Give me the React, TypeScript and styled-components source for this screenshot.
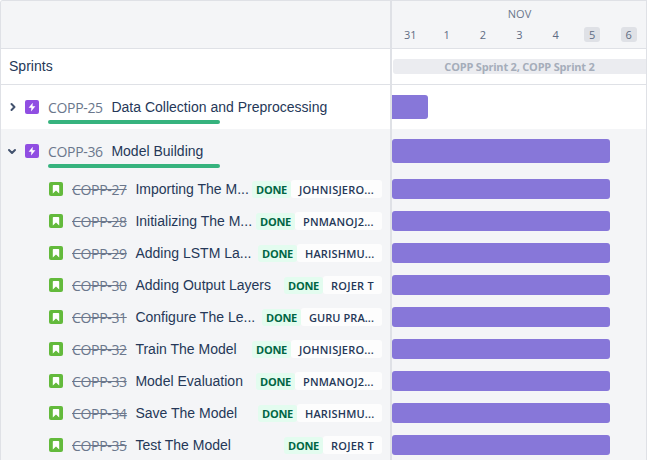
import React from 'react';
import styled, { createGlobalStyle } from 'styled-components';

const line = '#dfe1e6';
const ui = "'Open Sans', 'Noto Sans', sans-serif";

const Global = createGlobalStyle`
  body { margin: 0; background: #fff; overflow: hidden; }
  * { box-sizing: border-box; }
`;

const Roadmap = styled.div`
  width: 647px;
  height: 460px;
  display: grid;
  grid-template-columns: 391px 254px;
  overflow: hidden;
  border: 1px solid ${line};
  border-width: 1px 1px 0 1px;
  border-top-left-radius: 3px;
  font-family: 'Liberation Sans', Arial, sans-serif;
  color: #253858;
  background: #f4f5f7;
`;

const Issues = styled.div`
  border-right: 2px solid ${line};
  min-width: 0;
`;

const Timeline = styled.div`
  min-width: 0;
  overflow: hidden;
`;

const Header = styled.div`
  height: 48px;
  border-bottom: 1px solid ${line};
  background: #f4f5f7;
`;

const SprintRow = styled.div`
  height: 36px;
  display: flex;
  align-items: center;
  background: #fff;
  border-bottom: 1px solid ${line};
`;

const SprintLabel = styled.span`
  padding: 0 0 2px 8px;
  font-size: 14px;
  letter-spacing: 0.02px;
`;

const EpicRow = styled.div<{ $open?: boolean }>`
  height: 44px;
  display: flex;
  align-items: flex-start;
  background: ${(p) => (p.$open ? '#f4f5f7' : '#fff')};
`;

const Toggle = styled.svg`
  width: 12px;
  height: 12px;
  margin: 16px 6px 0 5px;
  flex: none;
`;

const TypeIcon = styled.svg`
  width: 14px;
  height: 14px;
  flex: none;
`;

const EpicIcon = styled(TypeIcon)`
  margin: 15px 9px 0 1px;
`;

const EpicBody = styled.div`
  padding-top: 13px;
`;

const TextLine = styled.div`
  display: flex;
  height: 18px;
  line-height: 18px;
  margin-bottom: 4px;
`;

const Key = styled.span<{ $done?: boolean }>`
  width: 63px;
  flex: none;
  padding-top: 1px;
  font-family: ${ui};
  font-size: 14px;
  line-height: 18px;
  letter-spacing: -0.33px;
  color: #6b778c;

  span {
    text-decoration: ${(p) => (p.$done ? 'line-through' : 'none')};
  }
`;

const Title = styled.span`
  padding-left: 0.4px;
  font-size: 14px;
  line-height: 18px;
  letter-spacing: 0.01px;
  white-space: nowrap;
`;

const Progress = styled.div`
  width: 171.5px;
  height: 4px;
  border-radius: 2px;
  background: #36b37e;
`;

const StoryRow = styled.div`
  height: 32px;
  display: flex;
  align-items: center;
  padding: 0 8px 0 48px;
`;

const StoryIcon = styled(TypeIcon)`
  margin-right: 9px;
`;

const Spacer = styled.div`
  flex: 1;
`;

const Status = styled.span`
  width: 39px;
  height: 17px;
  border-radius: 3px;
  background: #e3fcef;
  color: #006644;
  font: 700 11px/18px ${ui};
  letter-spacing: -0.25px;
  text-align: center;
`;

const Assignee = styled.span<{ $width: number; $tracking: number }>`
  width: ${(p) => p.$width}px;
  height: 18px;
  padding-left: 8px;
  border-radius: 3px;
  background: #fdfdfd;
  color: #253858;
  font: 600 11px/19px ${ui};
  letter-spacing: ${(p) => p.$tracking}px;
  white-space: nowrap;
`;

const Month = styled.div`
  height: 25px;
  padding: 4px 0 0 1px;
  text-align: center;
  font: 11px/18px ${ui};
  color: #6b778c;
`;

const Days = styled.div`
  display: flex;
  width: 270px;
`;

const DayCell = styled.div`
  width: 36.4px;
  flex: none;
  display: flex;
  justify-content: center;
`;

const Day = styled.span<{ $weekend?: boolean }>`
  width: 16px;
  height: 15px;
  margin-top: 1px;
  border-radius: 3px;
  text-align: center;
  font: 11px/16px ${ui};
  color: #5e6c84;
  background: ${(p) => (p.$weekend ? '#dfe1e6' : 'transparent')};
`;

const Sprint = styled.div`
  width: 253px;
  height: 15px;
  margin: 0 0 1px 1px;
  border-radius: 3px 0 0 3px;
  background: #ebecf0;
  color: #a5adba;
  font: 700 11px/16px ${ui};
  letter-spacing: -0.2px;
  text-align: center;
  white-space: nowrap;
`;

const Track = styled.div<{ $height: number; $white?: boolean }>`
  height: ${(p) => p.$height}px;
  display: flex;
  align-items: center;
  background: ${(p) => (p.$white ? '#fff' : 'transparent')};
`;

const Bar = styled.div<{ $width: number; $tall?: boolean; $clipped?: boolean }>`
  width: ${(p) => p.$width}px;
  height: ${(p) => (p.$tall ? 24 : 20)}px;
  border-radius: ${(p) => (p.$clipped ? '0 3px 3px 0' : '3px')};
  background: #8777d9;
`;

const stories = [
  { id: 27, title: 'Importing The M...', who: 'JOHNISJERO...', width: 91, tracking: 0.19 },
  { id: 28, title: 'Initializing The M...', who: 'PNMANOJ2...', width: 87, tracking: 0.19 },
  { id: 29, title: 'Adding LSTM La...', who: 'HARISHMU...', width: 85, tracking: 0.16 },
  { id: 30, title: 'Adding Output Layers', who: 'ROJER T', width: 59, tracking: 0.25 },
  { id: 31, title: 'Configure The Le...', who: 'GURU PRA...', width: 81, tracking: 0.06 },
  { id: 32, title: 'Train The Model', who: 'JOHNISJERO...', width: 91, tracking: 0.19 },
  { id: 33, title: 'Model Evaluation', who: 'PNMANOJ2...', width: 87, tracking: 0.19 },
  { id: 34, title: 'Save The Model', who: 'HARISHMU...', width: 85, tracking: 0.16 },
  { id: 35, title: 'Test The Model', who: 'ROJER T', width: 59, tracking: 0.25 },
];

const days = [31, 1, 2, 3, 4, 5, 6];

function Epic({ id, title, open }: { id: number; title: string; open?: boolean }) {
  return (
    <EpicRow $open={open}>
      <Toggle viewBox="0 0 12 12" fill="none" stroke="#42526e" strokeWidth="2" strokeLinecap="round" strokeLinejoin="round">
        <path d={open ? 'M3 5l3 3 3-3' : 'M5.5 3l3 3-3 3'} />
      </Toggle>
      <EpicIcon viewBox="0 0 14 14">
        <rect width="14" height="14" rx="2" fill="#904ee2" />
        <path d="M7.8 2.8L3.6 7.7h2.8L6 11.4 10.4 6.3H7.5z" fill="#fff" />
      </EpicIcon>
      <EpicBody>
        <TextLine>
          <Key>{`COPP-${id}`}</Key>
          <Title>{title}</Title>
        </TextLine>
        <Progress />
      </EpicBody>
    </EpicRow>
  );
}

export default function App() {
  return (
    <>
      <Global />
      <Roadmap>
        <Issues>
          <Header />
          <SprintRow>
            <SprintLabel>Sprints</SprintLabel>
          </SprintRow>
          <Epic id={25} title="Data Collection and Preprocessing" />
          <Epic id={36} title="Model Building" open />
          {stories.map((s) => (
            <StoryRow key={s.id}>
              <StoryIcon viewBox="0 0 14 14">
                <rect width="14" height="14" rx="2" fill="#63ba3c" />
                <path d="M3.8 3.8Q3.8 3 4.6 3h4.8q.8 0 .8.8V11.6L7 8.6 3.8 11.6z" fill="#fff" />
              </StoryIcon>
              <Key $done>
                <span>{`COPP-${s.id}`}</span>
              </Key>
              <Title>{s.title}</Title>
              <Spacer />
              <Status>DONE</Status>
              <Assignee $width={s.width} $tracking={s.tracking}>
                {s.who}
              </Assignee>
            </StoryRow>
          ))}
        </Issues>
        <Timeline>
          <Header>
            <Month>NOV</Month>
            <Days>
              {days.map((d) => (
                <DayCell key={d}>
                  <Day $weekend={d === 5 || d === 6}>{d}</Day>
                </DayCell>
              ))}
            </Days>
          </Header>
          <SprintRow>
            <Sprint>COPP Sprint 2, COPP Sprint 2</Sprint>
          </SprintRow>
          <Track $height={44} $white>
            <Bar $width={36.3} $tall $clipped />
          </Track>
          <Track $height={44}>
            <Bar $width={218.3} $tall />
          </Track>
          {stories.map((s) => (
            <Track $height={32} key={s.id}>
              <Bar $width={218.3} />
            </Track>
          ))}
        </Timeline>
      </Roadmap>
    </>
  );
}
